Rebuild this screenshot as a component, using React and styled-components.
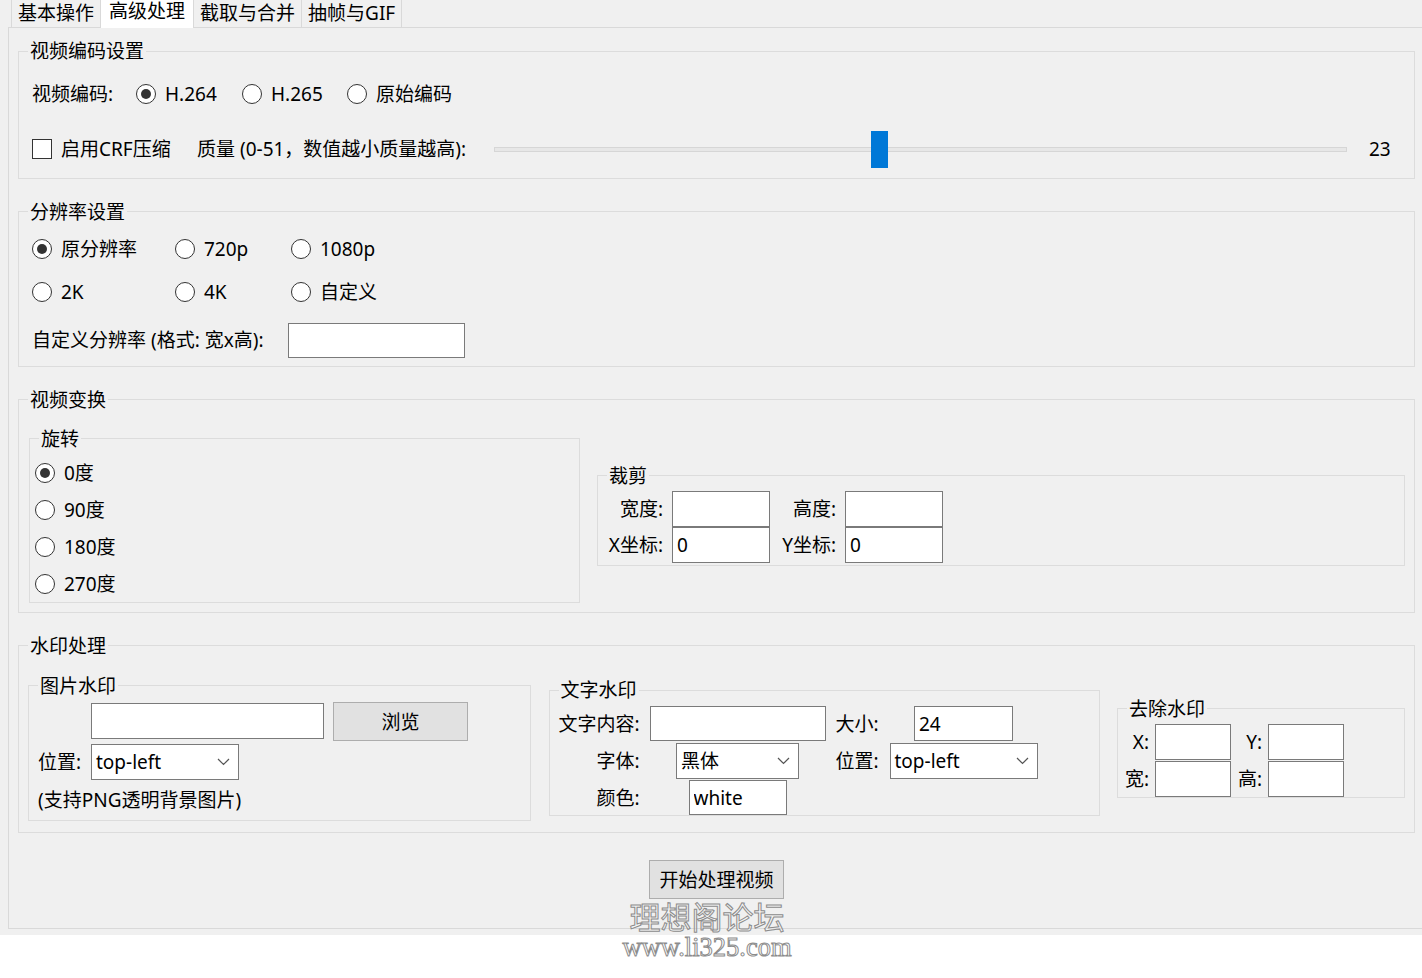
import React from "react";
import styled, { createGlobalStyle } from "styled-components";

const GlobalStyle = createGlobalStyle`
  html, body { margin: 0; padding: 0; background: #ffffff; }
  body {
    font-family: "Noto Sans", "Noto Sans CJK SC", sans-serif;
    font-size: 19px;
    color: #000;
    overflow: hidden;
  }
  * { box-sizing: border-box; }
`;

const Page = styled.div`
  position: relative;
  width: 1422px;
  height: 978px;
  overflow: hidden;
`;

const Window = styled.div`
  display: flex;
  flex-direction: column;
  height: 935px;
  padding-left: 8px;
  background: #f0f0f0;
  overflow: hidden;
`;

const TabBar = styled.div`
  position: relative;
  z-index: 1;
  display: flex;
  align-items: flex-end;
  height: 29px;
  margin-top: -2px;
  padding-left: 3px;
`;

const Tab = styled.div`
  display: flex;
  align-items: center;
  height: ${(p) => (p.$active ? 31 : 29)}px;
  margin-bottom: ${(p) => (p.$active ? -1 : 0)}px;
  padding: 0 ${(p) => (p.$active ? 8 : 6)}px ${(p) => (p.$active ? 5 : 0)}px;
  background: ${(p) => (p.$active ? "#ffffff" : "#f0f0f0")};
  border: 1px solid #d9d9d9;
  border-bottom: none;
  line-height: 24px;
  white-space: nowrap;
  & + & { margin-left: -1px; }
`;

const Panel = styled.div`
  display: flex;
  flex-direction: column;
  gap: 21px;
  width: 1417px;
  height: 902px;
  padding: 11px 9px 0;
  border: 1px solid #d9d9d9;
`;

const Group = styled.fieldset`
  margin: 0;
  min-width: 0;
  padding: 0;
  border: 1px solid #dcdcdc;
`;

const Legend = styled.legend`
  margin-left: 9px;
  padding: 0 2px;
  line-height: 24px;
  white-space: nowrap;
`;

const Body = styled.div`
  padding: ${(p) => p.$pad};
`;

const GroupBox = ({ title, pad, children }) => (
  <Group>
    <Legend>{title}</Legend>
    <Body $pad={pad}>{children}</Body>
  </Group>
);

const Text = styled.span`
  line-height: 24px;
  white-space: nowrap;
  justify-self: ${(p) => (p.$right ? "end" : "start")};
`;

const RadioItem = styled.label`
  display: flex;
  align-items: center;
  gap: 9px;
  height: 24px;
  line-height: 24px;
  white-space: nowrap;
`;

const RadioDot = styled.span`
  position: relative;
  flex: none;
  width: 20px;
  height: 20px;
  border: 1px solid #333;
  border-radius: 50%;
  background: #fff;
  &::after {
    content: "";
    display: ${(p) => (p.$on ? "block" : "none")};
    position: absolute;
    left: 4px;
    top: 4px;
    width: 10px;
    height: 10px;
    border-radius: 50%;
    background: #333;
  }
`;

const Radio = ({ on, children }) => (
  <RadioItem>
    <RadioDot $on={on} />
    {children}
  </RadioItem>
);

const CheckBox = styled.span`
  flex: none;
  width: 20px;
  height: 20px;
  border: 1px solid #333;
  background: #fff;
`;

const CheckItem = styled.label`
  display: flex;
  align-items: center;
  gap: 9px;
  line-height: 24px;
  white-space: nowrap;
`;

const Field = styled.input`
  width: ${(p) => (p.$w ? `${p.$w}px` : "100%")};
  height: ${(p) => p.$h || 36}px;
  margin: 0;
  padding: 0 4px;
  border: 1px solid #7a7a7a;
  border-radius: 0;
  background: #fff;
  font: inherit;
  color: #000;
  outline: none;
  justify-self: ${(p) => (p.$center ? "center" : "start")};
  grid-column: ${(p) => p.$col || "auto"};
`;

const ComboBox = styled.div`
  display: flex;
  align-items: center;
  justify-content: space-between;
  width: ${(p) => p.$w}px;
  height: 36px;
  padding: 0 8px 0 4px;
  border: 1px solid #7a7a7a;
  background: #fff;
  line-height: 24px;
  white-space: nowrap;
  justify-self: ${(p) => (p.$center ? "center" : "start")};
`;

const Chevron = () => (
  <svg width="13" height="8" viewBox="0 0 13 8" fill="none">
    <polyline points="1,1 6.5,6.5 12,1" stroke="#555" strokeWidth="1.2" />
  </svg>
);

const Combo = ({ w, center, children }) => (
  <ComboBox $w={w} $center={center}>
    <span>{children}</span>
    <Chevron />
  </ComboBox>
);

const PushButton = styled.button`
  width: ${(p) => p.$w}px;
  height: 39px;
  margin: 0;
  padding: 0;
  border: 1px solid #adadad;
  border-radius: 0;
  background: #e1e1e1;
  font: inherit;
  color: #000;
  align-self: ${(p) => (p.$centered ? "center" : "auto")};
  margin-top: ${(p) => p.$top || 0}px;
`;

/* 视频编码设置 */
const CodecRow = styled.div`
  display: grid;
  grid-template-columns: 104px 106px 105px auto;
  align-items: center;
  height: 24px;
`;

const CrfRow = styled.div`
  display: grid;
  grid-template-columns: 165px 297px 1fr 54px;
  align-items: center;
  height: 37px;
  margin-top: 24.5px;
`;

const Slider = styled.div`
  position: relative;
  display: flex;
  align-items: center;
  height: 37px;
`;

const Groove = styled.div`
  flex: 1;
  height: 5px;
  background: #e7e7e7;
  border: 1px solid #d6d6d6;
`;

const Handle = styled.div`
  position: absolute;
  top: 0;
  width: 17px;
  height: 37px;
  background: #0078d7;
`;

const SliderValue = styled.span`
  padding-left: 22px;
  line-height: 24px;
`;

/* 分辨率设置 */
const OptionGrid = styled.div`
  display: grid;
  grid-template-columns: 143px 116px auto;
  grid-auto-rows: 24px;
  row-gap: 19px;
`;

const CustomRow = styled.div`
  display: grid;
  grid-template-columns: 256px 177px;
  align-items: center;
  margin-top: 19px;
`;

/* 视频变换 / 水印处理 */
const SubGroups = styled.div`
  display: grid;
  grid-template-columns: ${(p) => p.$cols};
  column-gap: ${(p) => p.$gap}px;
  align-items: center;
`;

const RadioStack = styled.div`
  display: flex;
  flex-direction: column;
  gap: 13px;
`;

const FormGrid = styled.div`
  display: grid;
  grid-template-columns: ${(p) => p.$cols};
  grid-template-rows: ${(p) => p.$rows};
  column-gap: ${(p) => p.$cgap}px;
  row-gap: ${(p) => p.$rgap}px;
  align-items: center;
`;

const Note = styled.span`
  grid-column: 1 / -1;
  align-self: end;
  line-height: 24px;
  white-space: nowrap;
`;

const Stamp = styled.div`
  position: absolute;
  top: 900px;
  left: 0;
  width: 1414px;
  text-align: center;
  pointer-events: none;
`;

const StampTitle = styled.div`
  font-family: "Noto Sans CJK SC", sans-serif;
  font-size: 31px;
  line-height: 32px;
  color: rgba(255, 255, 255, 0.35);
  -webkit-text-stroke: 1px #8c8c8c;
`;

const StampUrl = styled.div`
  font-family: "Liberation Serif", serif;
  font-size: 26.5px;
  line-height: 30px;
  color: #ffffff;
  -webkit-text-stroke: 1px #8c8c8c;
`;

const QUALITY = 23;
const QUALITY_MAX = 51;

export default function App() {
  const handlePct = QUALITY / QUALITY_MAX;
  return (
    <Page>
      <GlobalStyle />
      <Window>
        <TabBar>
          <Tab>基本操作</Tab>
          <Tab $active>高级处理</Tab>
          <Tab>截取与合并</Tab>
          <Tab>抽帧与GIF</Tab>
        </TabBar>
        <Panel>
          <GroupBox title="视频编码设置" pad="19px 13px 10px">
            <CodecRow>
              <Text>视频编码:</Text>
              <Radio on>H.264</Radio>
              <Radio>H.265</Radio>
              <Radio>原始编码</Radio>
            </CodecRow>
            <CrfRow>
              <CheckItem>
                <CheckBox />
                启用CRF压缩
              </CheckItem>
              <Text>质量 (0-51，数值越小质量越高):</Text>
              <Slider>
                <Groove />
                <Handle style={{ left: `calc((100% - 17px) * ${handlePct})` }} />
              </Slider>
              <SliderValue>{QUALITY}</SliderValue>
            </CrfRow>
          </GroupBox>

          <GroupBox title="分辨率设置" pad="13px 13px 8px">
            <OptionGrid>
              <Radio on>原分辨率</Radio>
              <Radio>720p</Radio>
              <Radio>1080p</Radio>
              <Radio>2K</Radio>
              <Radio>4K</Radio>
              <Radio>自定义</Radio>
            </OptionGrid>
            <CustomRow>
              <Text>自定义分辨率 (格式: 宽x高):</Text>
              <Field $h={35} readOnly />
            </CustomRow>
          </GroupBox>

          <GroupBox title="视频变换" pad="15px 9px 9px 10px">
            <SubGroups $cols="551px 1fr" $gap={17}>
              <GroupBox title="旋转" pad="10px 6px 6px 5px">
                <RadioStack>
                  <Radio on>0度</Radio>
                  <Radio>90度</Radio>
                  <Radio>180度</Radio>
                  <Radio>270度</Radio>
                </RadioStack>
              </GroupBox>
              <GroupBox title="裁剪" pad="3px 8px 2px">
                <FormGrid $cols="57px 98px 57px 98px" $rows="36px 36px" $cgap={9} $rgap={0}>
                  <Text $right>宽度:</Text>
                  <Field readOnly />
                  <Text $right>高度:</Text>
                  <Field readOnly />
                  <Text $right>X坐标:</Text>
                  <Field readOnly defaultValue="0" />
                  <Text $right>Y坐标:</Text>
                  <Field readOnly defaultValue="0" />
                </FormGrid>
              </GroupBox>
            </SubGroups>
          </GroupBox>

          <GroupBox title="水印处理" pad="16px 9px 11px">
            <SubGroups $cols="503px 551px 288px" $gap={17.5}>
              <GroupBox title="图片水印" pad="4px 9px 8px">
                <FormGrid $cols="44px 233px 135px" $rows="39px 36px 29px" $cgap={9} $rgap={3}>
                  <Field readOnly $col="2" />
                  <PushButton $w={135}>浏览</PushButton>
                  <Text>位置:</Text>
                  <Combo w={148}>top-left</Combo>
                  <span />
                  <Note>(支持PNG透明背景图片)</Note>
                </FormGrid>
              </GroupBox>
              <GroupBox title="文字水印" pad="4px 7px 0">
                <FormGrid $cols="83px 176px 44px 148px" $rows="35px 36px 35px" $cgap={10} $rgap={1.5}>
                  <Text $right>文字内容:</Text>
                  <Field $h={35} readOnly />
                  <Text>大小:</Text>
                  <Field $h={35} $w={99} $center readOnly defaultValue="24" />
                  <Text $right>字体:</Text>
                  <Combo w={123} center>黑体</Combo>
                  <Text>位置:</Text>
                  <Combo w={148}>top-left</Combo>
                  <Text $right>颜色:</Text>
                  <Field $h={35} $w={98} $center readOnly defaultValue="white" />
                </FormGrid>
              </GroupBox>
              <GroupBox title="去除水印" pad="3px 6px 0">
                <FormGrid $cols="25px 76px 25px 76px" $rows="36px 36px" $cgap={6} $rgap={1}>
                  <Text $right>X:</Text>
                  <Field readOnly />
                  <Text $right>Y:</Text>
                  <Field readOnly />
                  <Text $right>宽:</Text>
                  <Field readOnly />
                  <Text $right>高:</Text>
                  <Field readOnly />
                </FormGrid>
              </GroupBox>
            </SubGroups>
          </GroupBox>

          <PushButton $w={135} $centered $top={6}>开始处理视频</PushButton>
        </Panel>
      </Window>
      <Stamp>
        <StampTitle>理想阁论坛</StampTitle>
        <StampUrl>www.li325.com</StampUrl>
      </Stamp>
    </Page>
  );
}
